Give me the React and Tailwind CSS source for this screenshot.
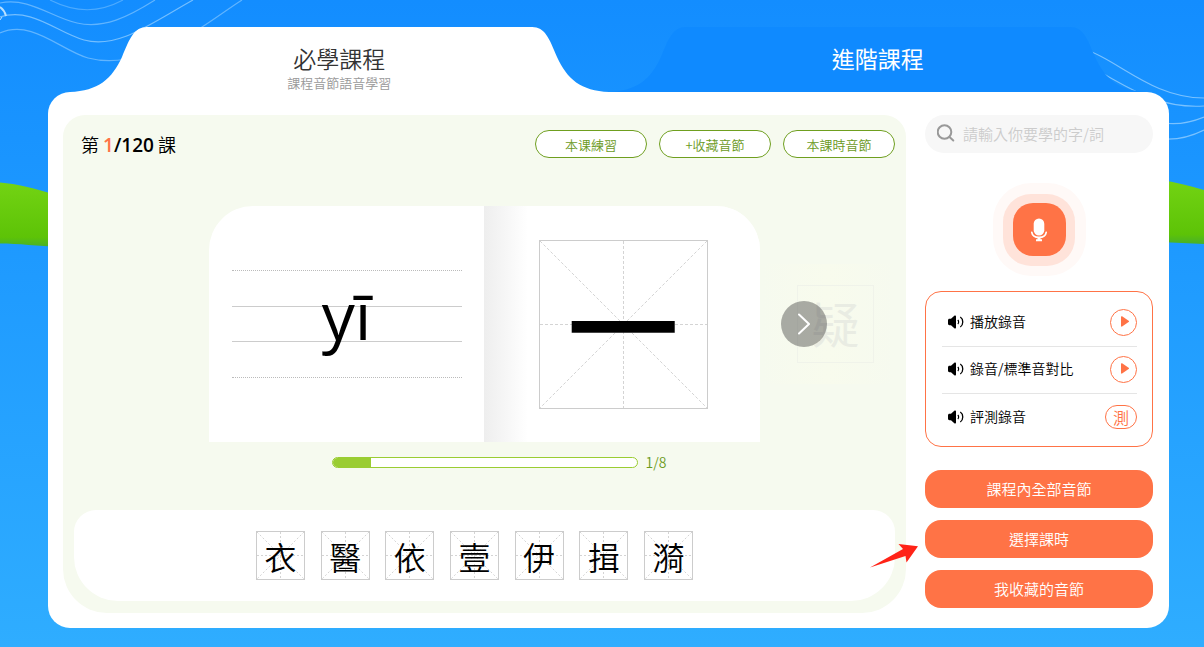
import React from "react";

const characters = ["衣", "醫", "依", "壹", "伊", "揖", "漪"];

function LeftScenery() {
  return (
    <svg className="pointer-events-none absolute left-0 top-0" width="260" height="260" fill="none" aria-hidden="true">
      <defs>
        <linearGradient id="hillLeft" x1="0" y1="0" x2="0" y2="1">
          <stop offset="0" stopColor="#73d313" />
          <stop offset="0.85" stopColor="#5dc307" />
          <stop offset="1" stopColor="#48b02a" />
        </linearGradient>
      </defs>
      <path d="M0 182.500C17 184 33 188 60 196V247C38 246 18 243.500 0 243.500Z" fill="url(#hillLeft)" />
      <g stroke="#8ccbff" strokeWidth="1.200" opacity="0.8">
        <path d="M50 0C76 13 99 13 123 0" opacity="0.6" />
        <path d="M0 3C30-3 52 18 77 23C104 29 128 17 155 0" opacity="0.8" />
        <path d="M0 17C32 7 56 32 84 40C118 49 150 24 193 0" />
        <path d="M0 33C32 19 60 50 88 58C122 67 165 52 202 27C216 18 228 9 242 0" opacity="0.8" />
      </g>
      <path d="M0 7C3 9 5 12 6 16" stroke="#b9e0ff" strokeWidth="2" />
      <path d="M0 20L2 17" stroke="#b9e0ff" />
    </svg>
  );
}

function RightScenery() {
  return (
    <svg className="pointer-events-none absolute right-0 top-0" width="124" height="260" fill="none" aria-hidden="true">
      <defs>
        <linearGradient id="hillRight" x1="0" y1="0" x2="0" y2="1">
          <stop offset="0" stopColor="#73d313" />
          <stop offset="0.85" stopColor="#5dc307" />
          <stop offset="1" stopColor="#48b02a" />
        </linearGradient>
      </defs>
      <path d="M80 180C95 182 110 186 124 190V244L80 242Z" fill="url(#hillRight)" />
      <g stroke="#8ccbff" strokeWidth="1.200" opacity="0.85">
        <path d="M0 48C36 57 70 98 124 98" />
        <path d="M20 72C48 87 78 109 124 106" />
        <path d="M84 123C99 125 112 122 124 117" />
        <path d="M84 139C100 140 112 136 124 130" />
      </g>
    </svg>
  );
}

function TabEdge({ flip = false }) {
  return (
    <svg
      className={flip ? "h-full w-[77px] shrink-0 -scale-x-100" : "h-full w-[77px] shrink-0"}
      viewBox="0 0 77 65"
      preserveAspectRatio="none"
      fill="currentColor"
      aria-hidden="true"
    >
      <path d="M0 65C28 64 42 52 52 30C60 11 64 0 77 0V65Z" />
    </svg>
  );
}

function CourseTab({ title, subtitle, selected, shape, text }) {
  return (
    <button type="button" role="tab" aria-selected={selected} className="relative flex h-[65px] flex-1 justify-center">
      <span className={`absolute inset-0 flex ${shape}`}>
        <TabEdge />
        <span className="-mx-px flex-1 bg-current" />
        <TabEdge flip />
      </span>
      <span className={`relative flex flex-col items-center pt-4 ${text}`}>
        <span className="text-[23px] leading-[31px]">{title}</span>
        {subtitle && <span className="text-[13px] leading-[18px] text-[#999]">{subtitle}</span>}
      </span>
    </button>
  );
}

function GuideLines({ dash = "2 2" }) {
  return (
    <svg className="absolute inset-0 h-full w-full" stroke="#d4d4d4" strokeDasharray={dash} aria-hidden="true">
      <line x1="0" y1="0" x2="100%" y2="100%" />
      <line x1="100%" y1="0" x2="0" y2="100%" />
      <line x1="50%" y1="0" x2="50%" y2="100%" />
      <line x1="0" y1="50%" x2="100%" y2="50%" />
    </svg>
  );
}

function Speaker() {
  return (
    <svg className="h-4 w-4 shrink-0" viewBox="0 0 16 16" fill="none" stroke="#000" aria-hidden="true">
      <path d="M1.500 4.800H3L6.300 1.800C7 1.200 8 1.500 8 2.500V13.500C8 14.500 7 14.800 6.300 14.200L3 11.200H1.500C0.600 11.200 0 10.500 0 9.600V6.400C0 5.500 0.600 4.800 1.500 4.800Z" fill="#000" stroke="none" />
      <path d="M9.800 6C10.900 7 10.900 9 9.800 10" strokeWidth="1.200" />
      <path d="M12.300 3C15.600 5.200 15.600 10.800 12.300 13" strokeWidth="1.300" />
    </svg>
  );
}

function PlayButton({ label }) {
  return (
    <button type="button" aria-label={label} className="flex size-[27px] items-center justify-center rounded-full border border-[#ff7346]">
      <svg width="10" height="11" viewBox="0 0 10 11" fill="#ff7346" className="ml-0.5 mb-0.5" aria-hidden="true">
        <path d="M1 0.800C1 0.200 1.600 0 2.100 0.300L8.600 4.700C9.200 5.100 9.200 5.700 8.600 6.100L2.100 10.500C1.600 10.800 1 10.600 1 10Z" />
      </svg>
    </button>
  );
}

function AudioRow({ label, children, last = false }) {
  return (
    <li className={last ? "flex h-[47px] items-center pb-0.5 pl-[6px]" : "flex h-[47px] items-center border-b border-[#e5e5e5] pb-0.5 pl-[6px]"}>
      <Speaker />
      <span className="ml-[6px] flex-1 pb-0.5 text-sm text-black">{label}</span>
      {children}
    </li>
  );
}

function OutlineButton({ children }) {
  return (
    <button type="button" className="h-7 w-28 rounded-full border border-[#6f9f1f] bg-white pt-0.5 text-[13px] text-[#6b9a1c]">
      {children}
    </button>
  );
}

function SolidButton({ children }) {
  return (
    <button type="button" className="h-[38px] w-full rounded-2xl bg-[#ff7346] text-[15px] text-white">
      {children}
    </button>
  );
}

function LessonPanel() {
  return (
    <section className="flex min-w-0 flex-1 flex-col rounded-t-[22px] rounded-b-[44px] bg-[#f6faef] px-[11px] pt-[15px] pb-3">
      <header className="flex h-7 items-center justify-between pl-[7px]">
        <h1 className="pt-0.5 text-lg text-black">
          第{" "}
          <b className="font-['Open_Sans','Noto_Sans',sans-serif] text-[19px] font-semibold">
            <span className="text-[#ff7346]">1</span>/120
          </b>{" "}
          課
        </h1>
        <div className="flex gap-3">
          <OutlineButton>本课練習</OutlineButton>
          <OutlineButton>+收藏音節</OutlineButton>
          <OutlineButton>本課時音節</OutlineButton>
        </div>
      </header>

      <div className="mt-12 grid grid-cols-[1fr_auto_1fr] items-center">
        <div />
        <div className="flex h-[236px] w-[551px] overflow-hidden rounded-t-[44px] bg-white">
          <div className="relative w-[275px] pr-[22px] pl-[23px] pt-16">
            <div className="h-9 border-t border-dotted border-[#bbb]" />
            <div className="h-[35px] border-t border-[#ccc]" />
            <div className="h-9 border-t border-[#ccc]" />
            <div className="border-t border-dotted border-[#bbb]" />
            <p className="absolute inset-0 flex items-center justify-center pb-5 font-['Open_Sans','Noto_Sans',sans-serif] text-[66px] leading-none font-normal text-black">
              yī
            </p>
          </div>
          <div className="flex flex-1 items-center justify-center bg-linear-to-r from-[#eee] to-white to-[44px] pl-0.5">
            <div className="relative flex size-[169px] items-center justify-center border border-[#ccc]">
              <GuideLines dash="3 2" />
              <span className="relative pb-1 text-[112px] leading-none font-medium text-black">一</span>
            </div>
          </div>
        </div>
        <div className="relative flex h-[120px] items-center bg-linear-to-r from-[#f6faef] via-[#f8fbed] to-[#f6faef] pl-[37px]">
          <div className="flex h-[78px] w-[77px] items-center justify-center border border-[#f0f3ea] pb-1 text-5xl font-normal text-[#e9ece3]">疑</div>
          <button
            type="button"
            aria-label="下一個"
            className="absolute left-[21px] top-[37px] flex size-[46px] items-center justify-center rounded-full bg-[#333]/40"
          >
            <svg width="12" height="22" viewBox="0 0 12 22" fill="none" stroke="#fff" strokeWidth="2" strokeLinecap="round" strokeLinejoin="round" aria-hidden="true">
              <path d="M1 1.500L11 11L1 20.500" />
            </svg>
          </button>
        </div>
      </div>

      <div className="mt-[10px] flex items-center justify-center gap-2 pl-[29px]">
        <div
          role="progressbar"
          aria-label="學習進度"
          aria-valuemin="0"
          aria-valuemax="8"
          aria-valuenow="1"
          className="h-[11px] w-[306px] overflow-hidden rounded-full border border-[#9acd32] bg-white"
        >
          <div className="h-full bg-[#9acd32]" style={{ width: `${(1 / 8) * 100}%` }} />
        </div>
        <span className="text-sm text-[#6b9a1c]">1/8</span>
      </div>

      <div className="mt-auto flex h-[91px] items-center justify-center rounded-t-[22px] rounded-b-[44px] bg-white pr-5">
        <ul className="flex w-[437px] justify-between">
          {characters.map((c) => (
            <li key={c}>
              <button type="button" className="relative flex size-[49px] items-center justify-center border border-[#ccc] text-black">
                <GuideLines />
                <span className="relative text-[32px] leading-none">{c}</span>
              </button>
            </li>
          ))}
        </ul>
      </div>
    </section>
  );
}

function Sidebar() {
  return (
    <aside className="flex w-[228px] shrink-0 flex-col">
      <label className="flex h-[38px] items-center rounded-full bg-[#f7f7f7] pl-3">
        <svg width="18" height="18" viewBox="0 0 18 18" fill="none" stroke="#999" strokeWidth="2" className="mb-0.5 shrink-0" aria-hidden="true">
          <circle cx="7.500" cy="8" r="6.800" />
          <path d="M12.500 13L16.300 16.500" strokeLinecap="round" />
        </svg>
        <input
          type="text"
          aria-label="搜尋"
          placeholder="請輸入你要學的字/詞"
          className="ml-2 w-full min-w-0 bg-transparent text-[15px] outline-none placeholder:text-[#ccc]"
        />
      </label>

      <div className="mt-[30px] flex size-[93px] items-center justify-center self-center rounded-[38px] bg-[#fff9f7]">
        <div className="flex size-[72px] items-center justify-center rounded-[28px] bg-[#ffe3da]">
          <button type="button" aria-label="錄音" className="flex size-[53px] items-center justify-center rounded-[20px] bg-[#ff7346]">
            <svg width="18" height="24" viewBox="0 0 18 24" fill="none" aria-hidden="true">
              <rect x="3.700" y="0.500" width="10.600" height="17" rx="5.300" fill="#fff" />
              <path d="M1.800 14.300C2.800 21 15.200 21 16.200 14.300" stroke="#fff" strokeWidth="1.700" strokeLinecap="round" />
              <path d="M7.500 19.300H10.500V21.300H12V23.300H6V21.300H7.500Z" fill="#fff" />
            </svg>
          </button>
        </div>
      </div>

      <ul className="mt-[15px] rounded-2xl border border-[#ff7346] pr-[15px] pl-4 pt-2 pb-[5px]">
        <AudioRow label="播放錄音">
          <PlayButton label="播放錄音" />
        </AudioRow>
        <AudioRow label="錄音/標準音對比">
          <PlayButton label="播放錄音與標準音" />
        </AudioRow>
        <AudioRow label="評測錄音" last>
          <button type="button" className="flex h-6 w-8 items-center justify-center rounded-full border border-[#ff7346] text-base leading-none text-[#ff7346]">
            測
          </button>
        </AudioRow>
      </ul>

      <div className="mt-[23px] flex flex-col gap-3">
        <SolidButton>課程內全部音節</SolidButton>
        <div className="relative">
          <SolidButton>選擇課時</SolidButton>
          <svg className="absolute right-full top-6 mr-[7px]" width="48" height="24" viewBox="0 0 48 24" fill="#ff2317" aria-hidden="true">
            <path d="M0 23.500L33 5L28.500 0L48 2.200L36.500 18.500L35.500 12Z" />
          </svg>
        </div>
        <SolidButton>我收藏的音節</SolidButton>
      </div>
    </aside>
  );
}

export default function App() {
  return (
    <div
      lang="zh-Hant"
      className="relative min-h-screen overflow-hidden bg-linear-to-b from-[#138dff] to-[#2fadff] pt-[27px] pr-[35px] pb-[19px] pl-12 font-[350] font-['Noto_Sans_CJK_TC',sans-serif]"
    >
      <LeftScenery />
      <RightScenery />
      <div className="relative">
        <div role="tablist" className="mx-[22px] flex">
          <CourseTab title="必學課程" subtitle="課程音節語音學習" selected shape="text-white" text="text-[#333]" />
          <CourseTab title="進階課程" selected={false} shape="text-[#0f8aff]" text="text-white font-normal" />
        </div>
        <main className="flex min-h-[536px] gap-[19px] rounded-[22px] bg-white pt-[23px] pr-4 pb-[15px] pl-[15px]">
          <LessonPanel />
          <Sidebar />
        </main>
      </div>
    </div>
  );
}
